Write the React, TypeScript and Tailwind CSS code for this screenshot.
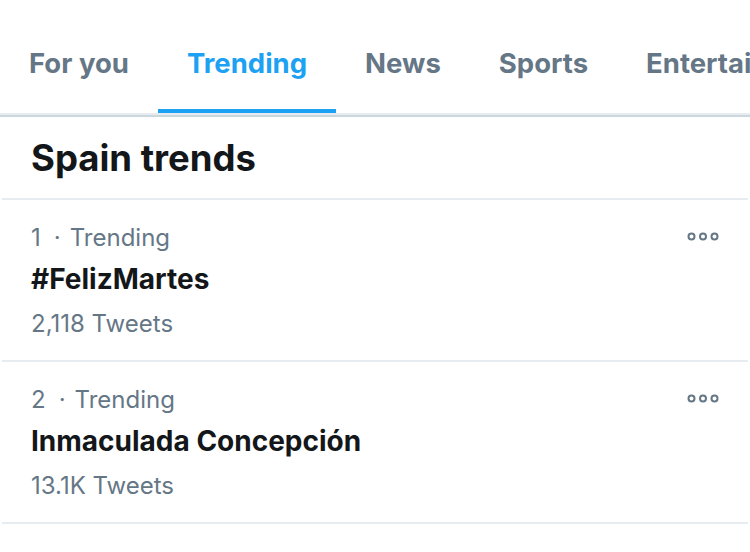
import React from 'react';

const tabs = ['For you', 'Trending', 'News', 'Sports', 'Entertainment'];

const trends = [
  { rank: 1, name: '#FelizMartes', count: '2,118 Tweets' },
  { rank: 2, name: 'Inmaculada Concepción', count: '13.1K Tweets' },
];

const MoreIcon: React.FC = () => (
  <svg width="32" height="9" viewBox="0 0 32 9" fill="none" stroke="#657786" strokeWidth="2">
    <circle cx="4.5" cy="4.5" r="3" />
    <circle cx="16" cy="4.5" r="3" />
    <circle cx="27.5" cy="4.5" r="3" />
  </svg>
);

const App: React.FC = () => {
  return (
    <div className="w-[750px] h-[552px] bg-white overflow-hidden" style={{ fontFamily: 'Inter, "Liberation Sans", sans-serif' }}>
      {/* Tabs */}
      <div className="flex whitespace-nowrap overflow-hidden">
        {tabs.map(tab => {
          const active = tab === 'Trending';
          return (
            <div
              key={tab}
              className={`shrink-0 h-[113px] px-[29px] pt-[46px] border-b-4 ${active ? 'border-[#1da1f2] text-[#1da1f2]' : 'border-transparent text-[#657786]'}`}
            >
              <span className="text-[27.5px] leading-[34px] font-bold">{tab}</span>
            </div>
          );
        })}
      </div>
      <div className="h-[2px] bg-[#e6ecf0]" />
      <div className="h-[2px] bg-[#ccd6dd]" />

      {/* Header */}
      <div className="px-[31px] pt-[21px] pb-[20px]">
        <h2 className="text-[36.5px] leading-[40px] font-bold text-[#14171a]">Spain trends</h2>
      </div>
      <div className="mx-[2px] h-[2px] bg-[#e6ecf0]" />

      {/* Trend rows */}
      {trends.map(t => (
        <div key={t.rank}>
          <div className="flex justify-between px-[31px] pt-[23px] pb-[21px]">
            <div>
              <div className="text-[24px] leading-[30px] text-[#657786]">
                {t.rank}<span className="ml-[13px] mr-[9px]">·</span>Trending
              </div>
              <div className="mt-[10px] text-[28px] leading-[32px] font-bold text-[#14171a]">{t.name}</div>
              <div className="mt-[14px] text-[24px] leading-[30px] text-[#657786]">{t.count}</div>
            </div>
            <div className="pt-[9px]">
              <MoreIcon />
            </div>
          </div>
          <div className="mx-[2px] h-[2px] bg-[#e6ecf0]" />
        </div>
      ))}
    </div>
  );
};

export default App;
